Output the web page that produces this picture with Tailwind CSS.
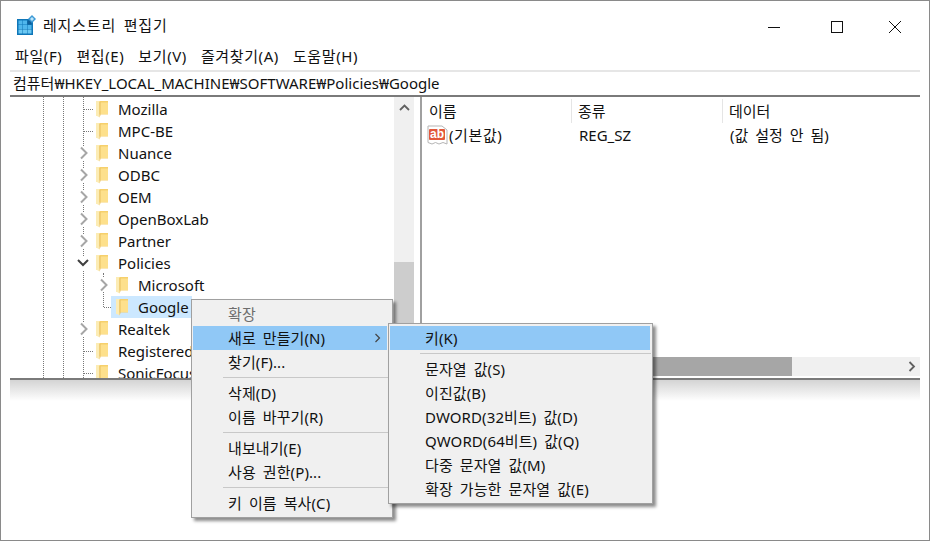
<!doctype html>
<html lang="ko">
<head>
<meta charset="utf-8">
<title>레지스트리 편집기</title>
<script src="https://cdn.jsdelivr.net/npm/@tailwindcss/browser@4"></script>
</head>
<body class="bg-white">
<svg class="hidden">
  <symbol id="folder" viewBox="0 0 13 18">
    <path d="M0 1h12v13.500H0z" fill="#f6d06c"/>
    <path d="M4 2.500h8V14H4z" fill="#fde08c"/>
    <path d="M0 1h3.500v16.500L1 16H0z" fill="#fcecb4"/>
    <path d="M3.500 2h1v13l-1 2.500z" fill="#e8bd5e"/>
  </symbol>
  <symbol id="open" viewBox="0 0 10 14"><path d="M2 1.500L7.500 7 2 12.500" fill="none" stroke="#a6a6a6" stroke-width="2"/></symbol>
</svg>
<div class="relative w-[930px] h-[541px] border border-[#8a8a8a] overflow-hidden text-[15px] text-[#111] font-['Noto_Sans','Noto_Sans_CJK_KR',sans-serif]">

  <!-- title bar -->
  <div class="flex items-center h-[41px] pl-[16px]">
    <svg class="w-[19px] h-[20px] mt-[6px]" viewBox="0 0 19 20">
      <rect x="0" y="4" width="16" height="16" fill="#0f76b8"/>
      <rect x="1.500" y="5.500" width="4" height="4" fill="#4fb6ec"/><rect x="6" y="5.500" width="4" height="4" fill="#4fb6ec"/><rect x="10.500" y="5.500" width="4" height="4" fill="#0f5f9a"/>
      <rect x="1.500" y="10" width="4" height="4" fill="#4fb6ec"/><rect x="6" y="10" width="4" height="4" fill="#4fb6ec"/><rect x="10.500" y="10" width="4" height="4" fill="#4fb6ec"/>
      <rect x="1.500" y="14.500" width="4" height="4" fill="#6cc8f2"/><rect x="6" y="14.500" width="4" height="4" fill="#6cc8f2"/><rect x="10.500" y="14.500" width="4" height="4" fill="#6cc8f2"/>
      <path d="M15 0l4 4-4 4-4-4z" fill="#3d9ad6"/><path d="M15 2l2 2-2 2-2-2z" fill="#bfe6fa"/>
    </svg>
    <span class="ml-[7px] mt-[7px] tracking-[0.8px] [word-spacing:3px]">레지스트리 편집기</span>
    <div class="ml-auto flex items-center mt-[11px] mr-[4px]">
      <svg class="w-[58px] h-[14px]" viewBox="0 0 58 14"><path d="M17 7.500h12" stroke="#111" fill="none"/></svg>
      <svg class="w-[58px] h-[14px]" viewBox="0 0 58 14"><rect x="22.500" y="1.500" width="11" height="11" stroke="#111" fill="none"/></svg>
      <svg class="w-[58px] h-[14px]" viewBox="0 0 58 14"><path d="M22 1l12 12M34 1L22 13" stroke="#111" fill="none"/></svg>
    </div>
  </div>

  <!-- menu bar -->
  <div class="flex items-center h-[28px] pl-[14px] gap-[14px] tracking-[0.6px]">
    <span>파일(F)</span><span>편집(E)</span><span>보기(V)</span><span>즐겨찾기(A)</span><span>도움말(H)</span>
  </div>

  <!-- address bar -->
  <div class="ml-[9px] mr-[9px] h-[27px] border-t-2 border-b-2 border-t-[#e6e6e6] border-b-[#7a7a7a] flex items-center pl-[3px] whitespace-nowrap">컴퓨터₩HKEY_LOCAL_MACHINE₩SOFTWARE₩Policies₩Google</div>

  <!-- split view -->
  <div class="ml-[9px] mr-[9px] h-[283px] flex border-b-2 border-b-[#7a7a7a]">
    <div class="relative w-[384px] h-[281px] overflow-hidden">
      <div class="absolute left-[33px] top-0 h-full border-l border-dotted border-[#777]"></div>
      <div class="absolute left-[53px] top-0 h-full border-l border-dotted border-[#777]"></div>
      <div class="absolute left-[73px] top-0 h-full border-l border-dotted border-[#777]"></div>
      <div class="absolute left-[93px] top-[176px] h-[34px] border-l border-dotted border-[#777]"></div>

      <div class="relative flex flex-col pt-[1px]">
        <div class="flex items-center h-[22px] pl-[74px]"><span class="w-[9px] mr-[3px] border-t border-dotted border-[#777]"></span><svg class="w-[13px] h-[18px]"><use href="#folder"/></svg><span class="ml-[9px]">Mozilla</span></div>
        <div class="flex items-center h-[22px] pl-[74px]"><span class="w-[9px] mr-[3px] border-t border-dotted border-[#777]"></span><svg class="w-[13px] h-[18px]"><use href="#folder"/></svg><span class="ml-[9px]">MPC-BE</span></div>
        <div class="flex items-center h-[22px] pl-[69px]"><svg class="w-[10px] h-[14px] mr-[7px] bg-white"><use href="#open"/></svg><svg class="w-[13px] h-[18px]"><use href="#folder"/></svg><span class="ml-[9px]">Nuance</span></div>
        <div class="flex items-center h-[22px] pl-[69px]"><svg class="w-[10px] h-[14px] mr-[7px] bg-white"><use href="#open"/></svg><svg class="w-[13px] h-[18px]"><use href="#folder"/></svg><span class="ml-[9px]">ODBC</span></div>
        <div class="flex items-center h-[22px] pl-[69px]"><svg class="w-[10px] h-[14px] mr-[7px] bg-white"><use href="#open"/></svg><svg class="w-[13px] h-[18px]"><use href="#folder"/></svg><span class="ml-[9px]">OEM</span></div>
        <div class="flex items-center h-[22px] pl-[69px]"><svg class="w-[10px] h-[14px] mr-[7px] bg-white"><use href="#open"/></svg><svg class="w-[13px] h-[18px]"><use href="#folder"/></svg><span class="ml-[9px]">OpenBoxLab</span></div>
        <div class="flex items-center h-[22px] pl-[69px]"><svg class="w-[10px] h-[14px] mr-[7px] bg-white"><use href="#open"/></svg><svg class="w-[13px] h-[18px]"><use href="#folder"/></svg><span class="ml-[9px]">Partner</span></div>
        <div class="flex items-center h-[22px] pl-[67px]"><svg class="w-[12px] h-[14px] mr-[7px] bg-white" viewBox="0 0 12 14"><path d="M1 4l5 5 5-5" fill="none" stroke="#404040" stroke-width="2"/></svg><svg class="w-[13px] h-[18px]"><use href="#folder"/></svg><span class="ml-[9px]">Policies</span></div>
        <div class="flex items-center h-[22px] pl-[89px]"><svg class="w-[10px] h-[14px] mr-[7px] bg-white"><use href="#open"/></svg><svg class="w-[13px] h-[18px]"><use href="#folder"/></svg><span class="ml-[9px]">Microsoft</span></div>
        <div class="flex items-center h-[22px] pl-[94px]"><span class="w-[7px] border-t border-dotted border-[#777]"></span><span class="flex items-center h-[22px] w-[81px] bg-[#cce8ff]"><svg class="w-[13px] h-[18px] ml-[5px]"><use href="#folder"/></svg><span class="ml-[9px]">Google</span></span></div>
        <div class="flex items-center h-[22px] pl-[69px]"><svg class="w-[10px] h-[14px] mr-[7px] bg-white"><use href="#open"/></svg><svg class="w-[13px] h-[18px]"><use href="#folder"/></svg><span class="ml-[9px]">Realtek</span></div>
        <div class="flex items-center h-[22px] pl-[74px]"><span class="w-[9px] mr-[3px] border-t border-dotted border-[#777]"></span><svg class="w-[13px] h-[18px]"><use href="#folder"/></svg><span class="ml-[9px]">RegisteredApplications</span></div>
        <div class="flex items-center h-[22px] pl-[74px]"><span class="w-[9px] mr-[3px] border-t border-dotted border-[#777]"></span><svg class="w-[13px] h-[18px]"><use href="#folder"/></svg><span class="ml-[9px]">SonicFocus</span></div>
      </div>
    </div>

    <!-- tree scrollbar -->
    <div class="w-[20px] h-[281px] bg-[#f0f0f0] flex flex-col">
      <div class="h-[21px] flex items-center justify-center"><svg class="w-[11px] h-[8px]" viewBox="0 0 11 8"><path d="M1 6l4.500-4.500L10 6" fill="none" stroke="#606060" stroke-width="1.800"/></svg></div>
      <div class="mt-[144px] h-[116px] bg-[#cdcdcd]"></div>
    </div>
    <div class="w-[6px]"></div>
    <div class="w-[2px] h-[281px] bg-[#a0a0a0]"></div>

    <!-- value list -->
    <div class="relative flex-1 h-[281px] overflow-hidden pl-[7px]">
      <div class="flex h-[27px] items-center">
        <span class="w-[143px] h-[24px] flex items-center pt-[1px] border-r border-[#e5e5e5]">이름</span>
        <span class="w-[151px] h-[24px] flex items-center pt-[1px] pl-[6px] border-r border-[#e5e5e5]">종류</span>
        <span class="pl-[6px] pt-[1px]">데이터</span>
      </div>
      <div class="flex h-[22px] items-center">
        <svg class="w-[22px] h-[22px] -ml-[2px]" viewBox="0 0 22 22">
          <path d="M1 2h14l5 4v14l-4-1.500-4 1.500-3.500-1.500L5 20l-4-1.500z" fill="#fff" stroke="#b5b5b5"/>
          <rect x="2" y="5" width="16" height="11" rx="1" fill="#e2583a"/>
          <text x="10" y="14.200" text-anchor="middle" font-size="12" font-weight="700" fill="#fff" font-family="Liberation Sans">ab</text>
        </svg>
        <span class="w-[130px] tracking-[0.6px]">(기본값)</span>
        <span class="w-[151px]">REG_SZ</span>
        <span class="[word-spacing:3px]">(값 설정 안 됨)</span>
      </div>
      <!-- horizontal scrollbar -->
      <div class="absolute left-0 right-0 top-[260px] h-[19px] bg-[#f0f0f0] flex items-center justify-end pr-[4px]">
        <svg class="w-[8px] h-[11px]" viewBox="0 0 8 11"><path d="M1.500 1l4.500 4.500L1.500 10" fill="none" stroke="#606060" stroke-width="1.800"/></svg>
      </div>
      <div class="absolute left-0 top-[260px] h-[19px] w-[370px] bg-[#a6a6a6]"></div>
    </div>
  </div>

  <!-- bottom shadow of the client area -->
  <div class="ml-[9px] mr-[9px] h-[21px] bg-gradient-to-b from-[#d4d4d4] to-white"></div>

  <!-- context menu -->
  <div class="absolute left-[190px] top-[298px] w-[202px] h-[219px] bg-[#f0f0f0] border border-[#a0a0a0] shadow-[3px_3px_3px_rgba(0,0,0,0.45)] py-[2px] px-[1px] [word-spacing:3px] tracking-[0.1px]">
    <div class="h-[24px] pl-[35px] flex items-center text-[#6d6d6d]">확장</div>
    <div class="h-[24px] pl-[35px] flex items-center bg-[#90c8f6] w-[194px]">새로 만들기(N)<svg class="ml-auto mr-[6px] w-[7px] h-[10px]" viewBox="0 0 7 10"><path d="M1.500 1l4 4-4 4" fill="none" stroke="#444" stroke-width="1.200"/></svg></div>
    <div class="h-[24px] pl-[35px] flex items-center">찾기(F)...</div>
    <div class="h-[7px] ml-[30px] flex items-center"><div class="w-full h-px bg-[#c8c8c8]"></div></div>
    <div class="h-[24px] pl-[35px] flex items-center">삭제(D)</div>
    <div class="h-[24px] pl-[35px] flex items-center">이름 바꾸기(R)</div>
    <div class="h-[7px] ml-[30px] flex items-center"><div class="w-full h-px bg-[#c8c8c8]"></div></div>
    <div class="h-[24px] pl-[35px] flex items-center">내보내기(E)</div>
    <div class="h-[24px] pl-[35px] flex items-center">사용 권한(P)...</div>
    <div class="h-[7px] ml-[30px] flex items-center"><div class="w-full h-px bg-[#c8c8c8]"></div></div>
    <div class="h-[24px] pl-[35px] flex items-center">키 이름 복사(C)</div>
  </div>

  <!-- submenu -->
  <div class="absolute left-[387px] top-[322px] w-[265px] h-[181px] bg-[#f0f0f0] border border-[#a0a0a0] shadow-[3px_3px_3px_rgba(0,0,0,0.45)] py-[2px] px-[1px] [word-spacing:3px] tracking-[0.1px]">
    <div class="h-[24px] pl-[35px] flex items-center bg-[#90c8f6] w-[260px]">키(K)</div>
    <div class="h-[7px] ml-[30px] flex items-center"><div class="w-full h-px bg-[#c8c8c8]"></div></div>
    <div class="h-[24px] pl-[35px] flex items-center">문자열 값(S)</div>
    <div class="h-[24px] pl-[35px] flex items-center">이진값(B)</div>
    <div class="h-[24px] pl-[35px] flex items-center">DWORD(32비트) 값(D)</div>
    <div class="h-[24px] pl-[35px] flex items-center">QWORD(64비트) 값(Q)</div>
    <div class="h-[24px] pl-[35px] flex items-center">다중 문자열 값(M)</div>
    <div class="h-[24px] pl-[35px] flex items-center">확장 가능한 문자열 값(E)</div>
  </div>
</div>
</body>
</html>
